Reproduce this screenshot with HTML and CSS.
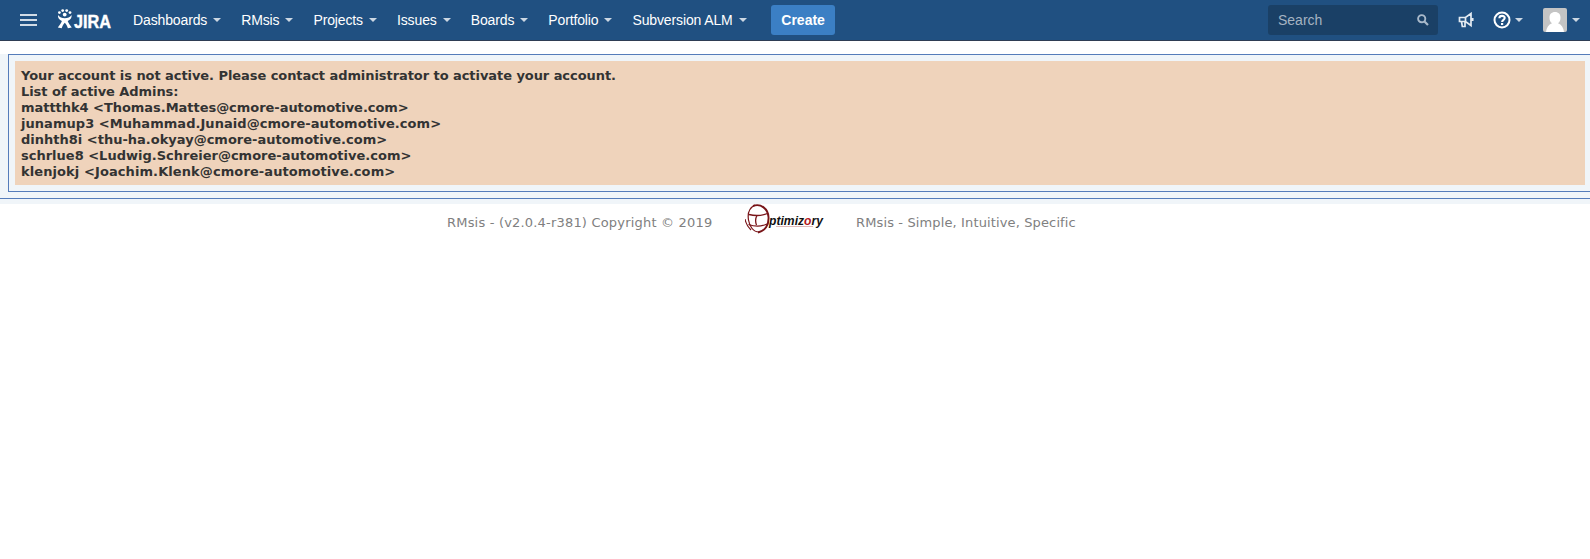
FILE: index.html
```html
<!DOCTYPE html>
<html lang="en">
<head>
<meta charset="utf-8">
<title>RMsis - JIRA</title>
<link rel="stylesheet" href="styles.css">
</head>
<body>
<header class="header">
  <button class="menu" aria-label="Menu"><span></span><span></span><span></span></button>
  <svg class="logo" width="56" height="28" viewBox="0 -2 56 28">
    <g fill="#fff">
      <circle cx="2.400" cy="4.600" r="1.400"/><circle cx="5.700" cy="2.600" r="1.400"/><circle cx="9.700" cy="2.600" r="1.400"/><circle cx="13" cy="4.600" r="1.400"/>
      <circle cx="7.700" cy="6.600" r="1.900"/>
      <path d="M1 7c1.600 2.600 4 3.200 6.800 3.200S13 9.600 14.600 7c.4 3-1.400 4.800-3.900 6 1 2.400 2.200 4 4.100 6.500l-3.900.8c-.7-2.300-1.500-4-3.100-5.600-1.600 1.600-2.400 3.300-3.100 5.600l-3.900-.8C2.700 17 3.900 15.400 4.900 13 2.400 11.800.6 10 1 7z"/>
    </g>
    <text class="logo-text" x="17" y="20" textLength="37" lengthAdjust="spacingAndGlyphs">JIRA</text>
  </svg>
  <nav class="nav">
    <a class="item">Dashboards</a><a class="item">RMsis</a><a class="item">Projects</a><a class="item">Issues</a><a class="item">Boards</a><a class="item">Portfolio</a><a class="item">Subversion ALM</a>
  </nav>
  <button class="create">Create</button>
  <div class="tools">
    <div class="search"><span>Search</span>
      <svg width="12" height="12" viewBox="0 0 12 12" fill="none" stroke="#a9b9ca"><circle cx="4.700" cy="4.700" r="3.600" stroke-width="1.900"/><path d="M7.500 7.500l3.500 3.500" stroke-width="2.200"/></svg>
    </div>
    <svg class="horn" width="16" height="16" viewBox="0 0 16 16" fill="none" stroke="#e4ebf2" stroke-width="1.700"><path d="M1.500 5.500v4h6L13 13.500v-12L7.500 5.500zM7.500 5.500v4M3.500 9.500l.8 5H7V9.500M14.700 6v3"/></svg>
    <div class="help">
      <svg width="18" height="18" viewBox="0 0 18 18"><circle cx="9" cy="9" r="7.500" fill="none" stroke="#fff" stroke-width="2"/><path d="M6.400 7.200c0-3.100 5.300-3.100 5.300-.1 0 1.800-2.600 1.900-2.600 4" fill="none" stroke="#fff" stroke-width="2.100"/><path d="M8 12h2.200v2H8z" fill="#fff"/></svg>
      <i class="caret"></i>
    </div>
    <div class="user">
      <svg width="24" height="24" viewBox="0 0 24 24"><rect width="24" height="24" rx="2" fill="#c4c4c4"/><path d="M3 24c.5-4.500 2.500-7.500 6-8.800-1.700-1.200-2.500-3-2.500-5.500C6.500 6.200 8.500 4 12 4s5.500 2.200 5.500 5.700c0 2.500-.8 4.300-2.500 5.500 3.500 1.300 5.500 4.300 6 8.800z" fill="#fff"/></svg>
      <i class="caret"></i>
    </div>
  </div>
</header>
<main class="panel">
  <div class="frame">
    <div class="message">
      <div class="tight">Your account is not active. Please contact administrator to activate your account.</div>
      <div class="tight">List of active Admins:</div>
      <div class="snug">mattthk4 &lt;Thomas.Mattes@cmore-automotive.com&gt;</div>
      <div class="loose">junamup3 &lt;Muhammad.Junaid@cmore-automotive.com&gt;</div>
      <div>dinhth8i &lt;thu-ha.okyay@cmore-automotive.com&gt;</div>
      <div>schrlue8 &lt;Ludwig.Schreier@cmore-automotive.com&gt;</div>
      <div class="looser">klenjokj &lt;Joachim.Klenk@cmore-automotive.com&gt;</div>
    </div>
  </div>
</main>
<footer class="footer">
  <span class="copyright">RMsis - (v2.0.4-r381) Copyright © 2019</span>
  <svg class="brand" width="80" height="32" viewBox="0 0 80 32">
    <g fill="none" stroke="#781418">
      <path d="M8 2C16-1 23 5 23.500 13S20 27 13 28.500" stroke-width="1.900"/>
      <path d="M10 1C4 4 2.500 10 3.500 16S8 28 14 28M0 15c1 5 3 8 6 11" stroke-width="1.200"/>
      <path d="M4 10.500c6 1.500 12 1.500 18.500-1M3.500 20.500c6 2 13 2 18.500-.5M12 11.500c-1.800 3-1.800 6-.5 9.500" stroke-width="1.300"/>
    </g>
    <text class="brand-text" x="24" y="21" textLength="54" lengthAdjust="spacingAndGlyphs">ptimiz<tspan fill="#b01722">o</tspan>ry</text>
    <path d="M31 22.500h37" stroke="#c98c8c" stroke-width=".6"/>
  </svg>
  <span class="tagline">RMsis - Simple, Intuitive, Specific</span>
</footer>
</body>
</html>
```
FILE: styles.css
```css
body { margin: 0; background: #fff; font-family: "Liberation Sans", Arial, sans-serif; }
button { border: 0; padding: 0; font: inherit; }
.header { box-sizing: border-box; height: 41px; display: flex; align-items: center; background: #205081; border-bottom: 1px solid #2e3d54; color: #fff; font-size: 14px; }
.menu { display: flex; flex-direction: column; gap: 3px; width: 17px; margin-left: 20px; background: none; }
.menu span { height: 2px; background: #d2dce6; }
.logo { margin-left: 20px; margin-top: -1px; overflow: visible; }
.logo-text { font: bold 18px "Liberation Sans", Arial, sans-serif; fill: #fff; stroke: #fff; stroke-width: .4px; }
.nav { display: flex; margin-left: 10px; }
.item { display: flex; align-items: center; padding: 0 10px; line-height: 30px; white-space: nowrap; letter-spacing: -.13px; }
.item::after, .caret { content: ""; width: 0; border: 4px solid transparent; border-top-color: #cdd8e3; border-bottom: 0; }
.item::after { margin-left: 6px; }
.create { width: 64px; height: 30px; margin-left: 14.5px; border-radius: 3px; background: #3b7fc4; color: #fff; font-weight: bold; }
.tools { display: flex; align-items: center; margin-left: auto; padding-right: 10px; }
.search { box-sizing: border-box; width: 170px; height: 30px; padding: 0 9px 0 10px; display: flex; align-items: center; justify-content: space-between; border-radius: 3px; background: #1a4066; color: #a5b3c2; }
.horn { margin-left: 20px; }
.help, .user { display: flex; align-items: center; }
.help { gap: 4px; margin-left: 19px; }
.user { gap: 5px; margin-left: 20px; }
.panel { display: flex; flex-direction: column; margin-top: 13px; padding-bottom: 5px; background: #f0f5f9; }
.panel::after { content: ""; height: 1px; margin-top: 6px; background: #557cba; }
.frame { margin-left: 8px; padding: 6px 5px 6px 6px; border: 1px solid #557cba; border-right: 0; }
.message { padding: 7px 6px 5px; background: #efd3bb; color: #333; font: bold 13px/16px "DejaVu Sans", Verdana, sans-serif; }
.tight { letter-spacing: -.065px; }
.snug { letter-spacing: -.04px; }
.loose { letter-spacing: .045px; }
.looser { letter-spacing: .09px; }
.footer { display: flex; align-items: flex-start; padding-left: 447px; color: #808080; font: 13px/16px "DejaVu Sans", Verdana, sans-serif; white-space: nowrap; }
.copyright { width: 266px; margin-top: 11px; letter-spacing: .19px; }
.brand { margin-left: 32px; }
.brand-text { font: italic bold 13px "Liberation Sans", Arial, sans-serif; fill: #111; }
.tagline { margin-left: 31px; margin-top: 11px; letter-spacing: .13px; }
```
